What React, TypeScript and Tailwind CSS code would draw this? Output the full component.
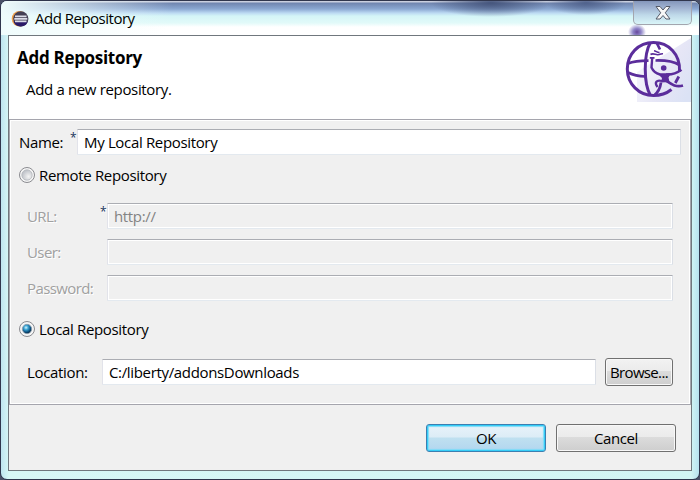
import React from "react";

function Field({ value, className, disabled = false }: { value: string; className: string; disabled?: boolean }) {
  return (
    <input
      readOnly
      defaultValue={value}
      className={`block h-[26px] shrink-0 rounded-[1px] border border-t-[#abadb3] border-r-[#dbdfe6] border-b-[#e3e9ef] border-l-[#e2e3ea] px-1.5 pb-px tracking-[-0.34px] outline-none ${
        disabled ? "bg-[#f0f0f0] text-[#838383] shadow-[inset_0_0_0_1px_#ffffff]" : "bg-white text-black"
      } ${className}`}
    />
  );
}

function Radio({ checked = false }: { checked?: boolean }) {
  return (
    <svg width="16" height="16" viewBox="0 0 16 16" className="shrink-0">
      <defs>
        <radialGradient id="off" cx="0.65" cy="0.65" r="0.7">
          <stop offset="0" stopColor="#f4f4f4" />
          <stop offset="1" stopColor="#b9bdc4" />
        </radialGradient>
        <radialGradient id="on" cx="0.4" cy="0.35" r="0.65">
          <stop offset="0" stopColor="#d4f6ff" />
          <stop offset="0.35" stopColor="#3da5d4" />
          <stop offset="0.75" stopColor="#0b4f7e" />
          <stop offset="1" stopColor="#0a2438" />
        </radialGradient>
      </defs>
      <circle cx="8" cy="8" r="7.5" fill="#f6f6f6" stroke="#8a8b90" />
      <circle cx="8" cy="8" r={checked ? 4.7 : 5.2} fill={checked ? "url(#on)" : "url(#off)"} stroke={checked ? "#8f9fb0" : "#b4b7bd"} strokeWidth="0.8" />
    </svg>
  );
}

function EclipseIcon() {
  return (
    <svg width="18" height="18" viewBox="0 0 18 18" className="shrink-0">
      <circle cx="8.400" cy="8.800" r="7.700" fill="#f0a04a" />
      <circle cx="9.800" cy="8.800" r="7.600" fill="#443f55" />
      <path d="M2.600 11.500h14.200A7.600 7.600 0 0 1 2.600 11.500Z" fill="#2a1a68" />
      <path d="M4 6.300h11.500M3.300 8.800h13M4 11.300h11.500" stroke="#dcdde8" strokeWidth="1.700" />
    </svg>
  );
}

function GlobeLogo() {
  return (
    <svg width="66" height="64" viewBox="625 38 66 64" className="shrink-0">
      <defs>
        <linearGradient id="wash" x1="0" y1="0.2" x2="1" y2="0.8">
          <stop offset="0.1" stopColor="#f6f6fc" />
          <stop offset="0.6" stopColor="#e6e6f6" />
          <stop offset="1" stopColor="#dbe2f5" />
        </linearGradient>
      </defs>
      <path d="M691 38v64h-54V72Z" fill="url(#wash)" />
      <g fill="none" stroke="#5b2d9b" strokeWidth="3">
        <path d="M679.500 71.500C680.500 54 668.500 42.500 653.500 42.500C638.500 42.500 627.300 54 627.300 69C627.300 84 639 95.500 653.500 95.500C660 95.500 666.500 93.500 671.500 89.500" />
        <path d="M650.500 42.500C643.500 54 643.500 84 650.500 95.500" />
        <path d="M656.500 42.500L660 49.500M654 95.500C658 92.500 660.300 88 661 82.500" strokeWidth="2.700" />
        <path d="M628 63.500C634 61 641 60.600 648.500 60.600M655.500 60.500C664 60.300 674 61.500 679.500 65M628 72.500C633 75 639 76.300 645.500 76.500" strokeWidth="2.700" />
        <path d="M678.800 76.500L675.300 83" strokeWidth="2.800" />
      </g>
      <circle cx="663.700" cy="68" r="2.800" fill="#5b2d9b" />
      <g fill="none" stroke="#5b2d9b" strokeLinejoin="round">
        <path d="M649.800 57.800H654.500" strokeWidth="1.800" />
        <path d="M652.200 58L651.500 67.500C653 71 656.500 73.500 660 74.500" strokeWidth="2.400" />
        <path d="M666 74.500C672 75 677 73 681.500 69.800" strokeWidth="2.600" />
        <path d="M662 81C656.500 79.500 654 82.500 657.500 87" strokeWidth="2.300" />
        <path d="M665 80C670 83 675 88 683 85.500" strokeWidth="2.700" />
      </g>
      <path d="M657 73C661 73.300 666 73 671 73.300L668.500 77.500L669.500 82L661 82.500L662 78Z" fill="#5b2d9b" />
      <path d="M650.500 54.500c2.500-1.700 4.500 0 7 .2s4-1.200 5.500-1M654 50.800c2 .2 3.500 2 5.500 1.600" fill="none" stroke="#5b2d9b" strokeWidth="1.600" />
    </svg>
  );
}

function Button({ label, className, primary = false }: { label: string; className: string; primary?: boolean }) {
  return (
    <button
      className={`h-7 shrink-0 rounded-[3px] border pb-px tracking-[-0.4px] ${
        primary
          ? "border-[#3c7fb1] bg-[linear-gradient(#e8f2fa,#dcecf6_12px,#bfe0f0_13px,#b2d6ef)] shadow-[inset_0_0_0_1px_#35cdf7,inset_0_0_1px_2px_#7fdcf8]"
          : "border-[#707070] bg-[linear-gradient(#f2f2f2,#ebebeb_12px,#dcdcdc_12px,#cecece)] shadow-[inset_0_0_0_1px_#f8f8f8]"
      } ${className}`}
    >
      {label}
    </button>
  );
}

export default function App() {
  return (
    <main className="h-[480px] w-[700px] overflow-hidden bg-[#4a5068] font-['Open_Sans','Noto_Sans',sans-serif] text-[15px] leading-5 tracking-[-0.34px] text-black">
      <section className="flex h-full flex-col overflow-hidden rounded-[7px] border border-[#30364d] bg-[linear-gradient(90deg,#bfe5f0,#d7f7f6_8px,#d2f5f4_690px,#b7e2ef)] px-[7px] pb-2">
        <header className="-mx-[7px] flex h-[34px] shrink-0 items-start justify-between bg-[radial-gradient(ellipse_9px_8px_at_636px_31px,#67479c,#8f86c8_45%,transparent),radial-gradient(ellipse_60px_14px_at_490px_2px,#46567d,transparent),radial-gradient(ellipse_40px_12px_at_585px_2px,#50628c,transparent),linear-gradient(100deg,#effcfc_0,transparent_170px),linear-gradient(#c9cfdf_0_1px,#7085af_2px,#8ba8d2_8px,#bcdaf2_12px,#d4f5f7_15px,#e2faf9_22px,#ffffff_26px)] pr-[7px] pl-[10px]">
          <div className="flex items-start gap-1.5 pt-[9px]">
            <EclipseIcon />
            <h1 className="-mt-[2px] w-[130px] tracking-[-0.5px] whitespace-nowrap">Add Repository</h1>
          </div>
          <button className="flex h-6 w-[59px] justify-center rounded-b-[5px] border border-t-0 border-[#a3a5ae] bg-[linear-gradient(#8496bb,#a5b8d5_8px,#bfd9e9_14px,#d9f5f8)] pt-[5px]">
            <svg width="16" height="14" viewBox="0 0 16 14">
              <path d="M1 .5h4l3 3.500 3-3.500h4L10.300 6.800 15 13h-4L8 9.500 5 13H1L5.700 6.800Z" fill="#f7f7f7" stroke="#555a68" />
            </svg>
          </button>
        </header>
        <div className="flex min-h-0 flex-1 flex-col border border-[#70777d] bg-[#f0f0f0]">
          <div className="flex h-[83px] shrink-0 items-start justify-between bg-white pt-0.5">
            <div className="pl-2">
              <h2 className="pt-2 text-[17px] leading-6 font-bold tracking-[-0.3px]">Add Repository</h2>
              <p className="pt-[9px] pl-[9px]">Add a new repository.</p>
            </div>
            <GlobeLogo />
          </div>
          <div className="h-[286px] shrink-0 border border-[#a5a5ad] pt-[9px] pl-[9px] shadow-[inset_0_0_0_1px_#ffffff]">
            <div className="flex">
              <span className="w-[51px] pt-[3px]">Name:</span>
              <span className="w-[7px] text-[12px] leading-[18px] text-[#20345c]">*</span>
              <Field value="My Local Repository" className="w-[604px]" />
            </div>
            <div className="flex h-10 items-center gap-1">
              <Radio />
              <span className="pb-px">Remote Repository</span>
            </div>
            <div className="flex flex-col gap-2.5 pt-2 pl-2 tracking-[-0.6px] text-[#a0a0a0] [text-shadow:1px_1px_0_#ffffff]">
              <div className="flex">
                <span className="w-[73px] pt-[3px]">URL:</span>
                <span className="w-[7px] text-[12px] leading-[18px] text-[#20345c]">*</span>
                <Field value="http://" disabled className="w-[566px]" />
              </div>
              <div className="flex">
                <span className="w-20 pt-[3px]">User:</span>
                <Field value="" disabled className="w-[566px]" />
              </div>
              <div className="flex">
                <span className="w-20 pt-[3px]">Password:</span>
                <Field value="" disabled className="w-[566px]" />
              </div>
            </div>
            <div className="mt-5 flex h-4 items-center gap-1">
              <Radio checked />
              <span className="pb-px">Local Repository</span>
            </div>
            <div className="flex items-center pt-[21px] pl-2">
              <span className="w-[75px] pb-px">Location:</span>
              <Field value="C:/liberty/addonsDownloads" className="w-[494px]" />
              <Button label="Browse..." className="ml-[9px] w-[68px] tracking-[-0.65px]" />
            </div>
          </div>
          <footer className="flex justify-end gap-2.5 pt-[19px] pr-[15px]">
            <Button label="OK" primary className="w-[120px]" />
            <Button label="Cancel" className="w-[120px]" />
          </footer>
        </div>
      </section>
    </main>
  );
}
